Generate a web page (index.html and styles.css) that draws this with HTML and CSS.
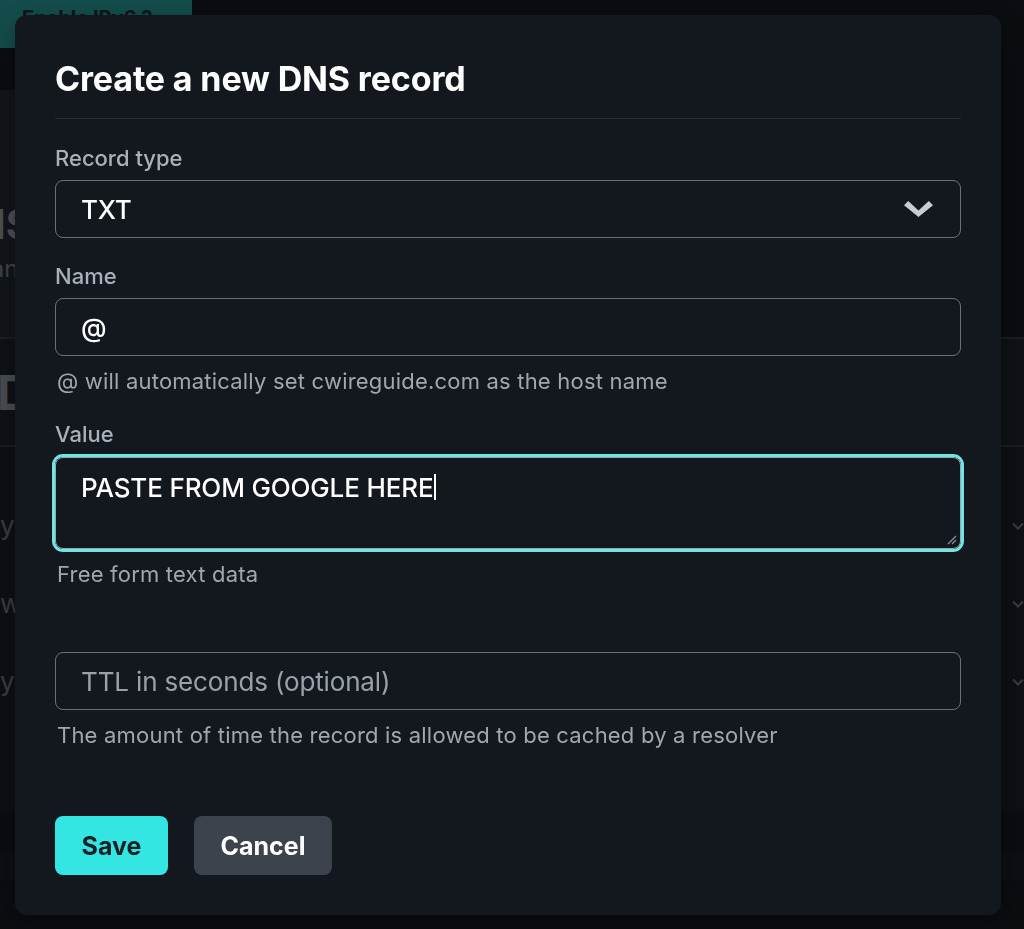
FILE: index.html
```html
<!DOCTYPE html>
<html lang="en">
<head>
<meta charset="utf-8">
<title>Create a new DNS record</title>
<link rel="stylesheet" href="styles.css">
</head>
<body>
<div class="page" aria-hidden="true">
  <header class="topbar">
    <button class="bg-btn" type="button">Enable IPv6 ?</button>
  </header>
  <main class="bg-main">
    <section class="bg-head">
      <h2 class="bg-h2">DNS</h2>
      <p class="bg-sub">Manage</p>
    </section>
    <section class="bg-section">
      <h3 class="bg-h3">DNS</h3>
    </section>
    <ul class="bg-list">
      <li class="bg-row"><span>your</span><svg class="bg-chev" viewBox="0 0 12 8"><path d="M1 1.5 6 6.5 11 1.5" fill="none" stroke="currentColor" stroke-width="2"/></svg></li>
      <li class="bg-row"><span>www</span><svg class="bg-chev" viewBox="0 0 12 8"><path d="M1 1.5 6 6.5 11 1.5" fill="none" stroke="currentColor" stroke-width="2"/></svg></li>
      <li class="bg-row"><span>your</span><svg class="bg-chev" viewBox="0 0 12 8"><path d="M1 1.5 6 6.5 11 1.5" fill="none" stroke="currentColor" stroke-width="2"/></svg></li>
    </ul>
    <div class="bg-foot"></div>
  </main>
</div>

<div class="overlay">
  <div class="modal" role="dialog" aria-labelledby="modal-title">
    <header class="modal-header">
      <h1 class="modal-title" id="modal-title">Create a new DNS record</h1>
    </header>
    <form class="form">
      <div class="field">
        <label class="label" for="rtype">Record type</label>
        <div class="select-wrap">
          <select class="control select" id="rtype">
            <option>TXT</option>
            <option>A</option>
            <option>AAAA</option>
            <option>CNAME</option>
            <option>MX</option>
          </select>
          <svg class="select-icon" viewBox="0 0 29 16" aria-hidden="true"><path d="M0 4.2 4.2 0 14.5 9.6 24.8 0 29 4.2 14.5 16Z" fill="currentColor"/></svg>
        </div>
      </div>

      <div class="field">
        <label class="label" for="rname">Name</label>
        <input class="control" id="rname" type="text" value="@">
        <p class="helper">@ will automatically set cwireguide.com as the host name</p>
      </div>

      <div class="field">
        <label class="label" for="rvalue">Value</label>
        <div class="textarea" id="rvalue" role="textbox" aria-multiline="true">
          <span class="textarea-text">PASTE FROM GOOGLE HERE</span><span class="caret"></span>
          <svg class="grip" viewBox="0 0 10 10" aria-hidden="true"><path d="M1 9 9 1M5 9 9 5" stroke="currentColor" stroke-width="1.2"/></svg>
        </div>
        <p class="helper">Free form text data</p>
      </div>

      <div class="field">
        <span class="label label-empty"></span>
        <input class="control" type="text" placeholder="TTL in seconds (optional)" aria-label="TTL in seconds">
        <p class="helper">The amount of time the record is allowed to be cached by a resolver</p>
      </div>
    </form>
    <footer class="modal-footer">
      <button class="btn btn-save" type="button">Save</button>
      <button class="btn btn-cancel" type="button">Cancel</button>
    </footer>
  </div>
</div>
</body>
</html>
```

FILE: styles.css
```css
* { box-sizing: border-box; }

html, body {
  margin: 0;
  height: 100%;
}

body {
  background: #151a22;
  font-family: Inter, "Noto Sans", sans-serif;
  overflow: hidden;
}

/* ---------- background page (dimmed by the overlay) ---------- */
.page {
  width: 1024px;
  height: 929px;
  overflow: hidden;
  display: flex;
  flex-direction: column;
}

.topbar {
  height: 48px;
  display: flex;
  flex: none;
}

.bg-btn {
  width: 192px;
  height: 48px;
  border: 0;
  background: #289a98;
  color: #1a2c30;
  font: 700 20px/24px Inter, sans-serif;
  text-align: left;
  padding: 6px 22px 0;
  display: flex;
  align-items: flex-start;
}

.bg-main {
  margin-top: 42px;
  display: flex;
  flex-direction: column;
}

.bg-head {
  background: #242b34;
  width: 640px;
  height: 247px;
  padding-top: 110px;
}

.bg-h2 {
  margin: 0 0 0 -55px;
  font: 700 41px/48px Inter, sans-serif;
  color: #9aa2ac;
}

.bg-sub {
  margin: 4px 0 0 -31px;
  font: 400 24px/34px Inter, sans-serif;
  color: #808891;
}

.bg-section {
  height: 110px;
  border-top: 2px solid #363c45;
  border-bottom: 2px solid #363c45;
  background: #1e242c;
  padding-top: 26px;
}

.bg-h3 {
  margin: 0 0 0 -3px;
  font: 700 48px/56px Inter, sans-serif;
  color: #959da7;
}

.bg-list {
  list-style: none;
  margin: 0;
  padding: 40px 0 0;
  background: #1b2028;
  height: 365px;
}

.bg-row {
  height: 78px;
  display: flex;
  align-items: center;
  justify-content: space-between;
  font: 400 26px/34px Inter, sans-serif;
  color: #747c86;
}

.bg-chev {
  width: 12px;
  height: 8px;
  color: #717881;
}

.bg-foot {
  height: 27px;
  margin-top: 41px;
  background: #1a1f27;
}

/* ---------- overlay + modal ---------- */
.overlay {
  position: fixed;
  inset: 0;
  background: rgba(0, 0, 0, 0.5);
  padding: 15px 0 0 15px;
}

.modal {
  width: 986px;
  background: #13181f;
  border-radius: 12px;
  padding: 44px 40px 40px;
  box-shadow: 0 10px 30px rgba(0, 0, 0, 0.35);
}

.modal-header {
  padding-bottom: 19px;
  border-bottom: 1px solid #2b3038;
}

.modal-title {
  margin: 0;
  font: 700 34px/40px Inter, sans-serif;
  letter-spacing: -0.15px;
  color: #ffffff;
}

.form {
  display: flex;
  flex-direction: column;
  gap: 24px;
  padding-top: 25px;
  margin: 0;
}

.field {
  display: flex;
  flex-direction: column;
}

.label {
  font: 500 22px/28px Inter, sans-serif;
  color: #a9b0ba;
  margin-bottom: 8px;
}

.label-empty {
  height: 31px;
}

.control {
  width: 100%;
  height: 58px;
  border: 1px solid #6b7078;
  border-radius: 8px;
  background: transparent;
  padding: 0 25px;
  font: 500 26px Inter, sans-serif;
  letter-spacing: -0.15px;
  color: #ffffff;
  outline: none;
}

.control::placeholder {
  color: #9aa1ab;
  font-weight: 400;
}

.select-wrap {
  position: relative;
}

.select {
  appearance: none;
  -webkit-appearance: none;
  display: block;
  cursor: pointer;
}

.select option {
  background: #13181f;
  color: #fff;
}

.select-icon {
  position: absolute;
  right: 28px;
  top: 21px;
  width: 29px;
  height: 16px;
  color: #c9cdd2;
  pointer-events: none;
}

.textarea {
  position: relative;
  height: 92px;
  margin-top: 1px;
  border: 1px solid #9ea5aa;
  border-radius: 8px;
  box-shadow: 0 0 0 3px #6fe6e6;
  padding: 12px 25px;
  font: 500 26px/36px Inter, sans-serif;
  letter-spacing: -0.15px;
  color: #ffffff;
  display: flex;
  align-items: flex-start;
}

.caret {
  width: 1.5px;
  height: 26px;
  background: #ffffff;
  margin-top: 4px;
  margin-left: 1px;
}

.grip {
  position: absolute;
  right: 3px;
  bottom: 3px;
  width: 10px;
  height: 10px;
  color: #8e9296;
}

.helper {
  margin: 10px 0 0;
  padding-left: 2px;
  font: 400 22px/30px Inter, sans-serif;
  letter-spacing: 0.2px;
  color: #a0a7b1;
}

.modal-footer {
  display: flex;
  gap: 26px;
  margin-top: 66px;
}

.btn {
  height: 59px;
  border: 0;
  border-radius: 8px;
  font: 700 25px Inter, sans-serif;
  padding: 0;
  cursor: pointer;
}

.btn-save {
  width: 113px;
  background: #33e6e1;
  color: #1a2027;
}

.btn-cancel {
  width: 138px;
  background: #3d434c;
  color: #ffffff;
}
```
